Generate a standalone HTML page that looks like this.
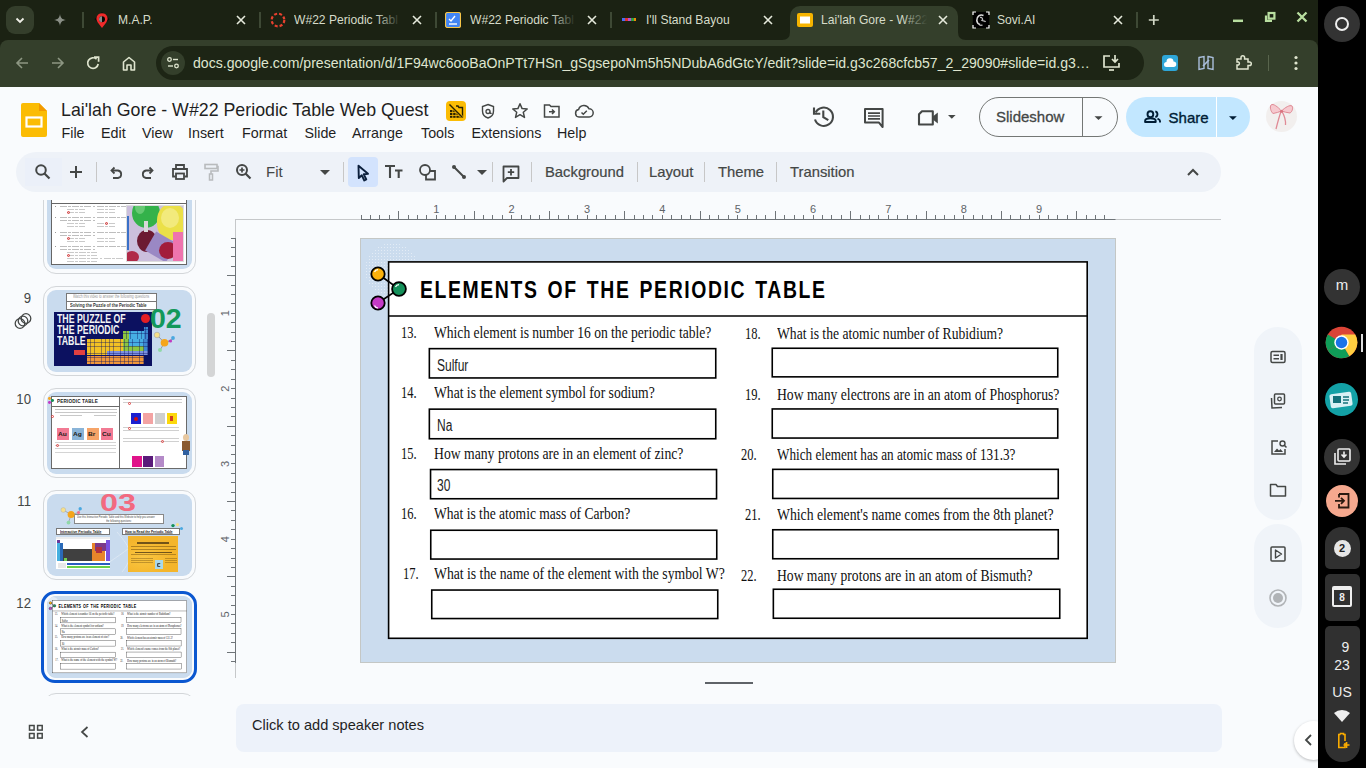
<!DOCTYPE html>
<html><head><meta charset="utf-8"><style>
*{box-sizing:border-box;margin:0;padding:0}
html,body{width:1366px;height:768px;overflow:hidden;background:#f9fbfd;font-family:"Liberation Sans",sans-serif;position:relative}
.a{position:absolute}
.tt{color:#d6dcc9;font-size:13px;white-space:nowrap;line-height:16px}
.q{font-family:"Liberation Serif",serif;font-size:16px;line-height:18px;color:#111;white-space:nowrap;transform-origin:0 0}
.ans{font-family:"Liberation Sans",sans-serif;font-size:16px;line-height:18px;color:#222;white-space:nowrap;transform:scaleX(0.75);transform-origin:0 0}
</style></head><body>
<div class="a" style="left:0;top:86px;width:1318px;height:682px;background:#f9fbfd"></div>
<div class="a" style="left:0;top:0;width:1318px;height:87px;background:#1b2213"></div>
<div class="a" style="left:6px;top:6px;width:28px;height:28px;border-radius:9px;background:#343e2b"></div>
<svg class="a" style="left:12px;top:12px" width="16" height="16" viewBox="0 0 16 16"><path d="M4.5 6.5 L8 10 L11.5 6.5" stroke="#f0f0e8" stroke-width="1.8" fill="none"/></svg>
<svg class="a" style="left:52px;top:12px" width="16" height="16" viewBox="0 0 16 16"><path d="M8 2 C8.6 6 10 7.4 14 8 C10 8.6 8.6 10 8 14 C7.4 10 6 8.6 2 8 C6 7.4 7.4 6 8 2Z" fill="#8a8f86"/></svg>
<div class="a" style="left:82px;top:12px;width:2px;height:16px;background:#3e4935"></div>
<div class="a" style="left:790px;top:6px;width:168px;height:34px;background:#343f2b;border-radius:10px 10px 0 0"></div>
<svg class="a" style="left:782px;top:32px" width="8" height="8"><path d="M0 8 Q8 8 8 0 L8 8Z" fill="#343f2b"/></svg>
<svg class="a" style="left:958px;top:32px" width="8" height="8"><path d="M8 8 Q0 8 0 0 L0 8Z" fill="#343f2b"/></svg>
<div class="a" style="left:118px;top:10px;width:110px;height:20px;overflow:hidden"><div class="a tt" style="left:0;top:2px;transform:scaleX(0.93);transform-origin:0 0">M.A.P.</div></div>
<svg class="a" style="left:235px;top:14px" width="12" height="12" viewBox="0 0 12 12"><path d="M2 2 L10 10 M10 2 L2 10" stroke="#e6eadc" stroke-width="1.6"/></svg>
<div class="a" style="left:259px;top:12px;width:2px;height:16px;background:#3e4935"></div>
<svg class="a" style="left:0;top:0;width:1px;height:1px;overflow:visible"><path d="M102 12 L109.5 19.3 L102 26 L94.5 19.3Z" fill="#0a0a0a"/><path d="M102 28 L97.6 22.2 A5.6 5.6 0 1 1 106.4 22.2Z" fill="#f02a2a"/><circle cx="102" cy="19.3" r="3" fill="#050505"/><path d="M102 16.3 A3 3 0 0 0 102 22.3Z" fill="#8a8a8a"/></svg>
<div class="a" style="left:294px;top:10px;width:110px;height:20px;overflow:hidden"><div class="a tt" style="left:0;top:2px;transform:scaleX(0.93);transform-origin:0 0">W#22 Periodic Tabl</div></div>
<div class="a" style="left:376px;top:10px;width:28px;height:20px;background:linear-gradient(90deg,rgba(0,0,0,0),#1b2213 90%)"></div>
<svg class="a" style="left:411px;top:14px" width="12" height="12" viewBox="0 0 12 12"><path d="M2 2 L10 10 M10 2 L2 10" stroke="#e6eadc" stroke-width="1.6"/></svg>
<div class="a" style="left:435px;top:12px;width:2px;height:16px;background:#3e4935"></div>
<svg class="a" style="left:270px;top:12px" width="16" height="16" viewBox="0 0 16 16"><circle cx="8" cy="8" r="6.3" stroke="#e8412f" stroke-width="2.2" fill="none" stroke-dasharray="3 2"/></svg>
<div class="a" style="left:470px;top:10px;width:109px;height:20px;overflow:hidden"><div class="a tt" style="left:0;top:2px;transform:scaleX(0.93);transform-origin:0 0">W#22 Periodic Tabl</div></div>
<div class="a" style="left:551px;top:10px;width:28px;height:20px;background:linear-gradient(90deg,rgba(0,0,0,0),#1b2213 90%)"></div>
<svg class="a" style="left:586px;top:14px" width="12" height="12" viewBox="0 0 12 12"><path d="M2 2 L10 10 M10 2 L2 10" stroke="#e6eadc" stroke-width="1.6"/></svg>
<div class="a" style="left:610px;top:12px;width:2px;height:16px;background:#3e4935"></div>
<svg class="a" style="left:445px;top:12px" width="16" height="16" viewBox="0 0 16 16"><rect x="0.5" y="0.5" width="15" height="15" rx="2" fill="#4285f4" stroke="#f7c548" stroke-width="1.2"/><path d="M4 7 L6 9 L10 4" stroke="#fff" stroke-width="1.4" fill="none"/><path d="M4 12 H12" stroke="#fff" stroke-width="1.4"/></svg>
<div class="a" style="left:646px;top:10px;width:109px;height:20px;overflow:hidden"><div class="a tt" style="left:0;top:2px;transform:scaleX(0.93);transform-origin:0 0">I'll Stand Bayou</div></div>
<svg class="a" style="left:762px;top:14px" width="12" height="12" viewBox="0 0 12 12"><path d="M2 2 L10 10 M10 2 L2 10" stroke="#e6eadc" stroke-width="1.6"/></svg>
<svg class="a" style="left:621px;top:12px" width="16" height="16" viewBox="0 0 16 16"><rect x="1" y="6" width="3" height="3" fill="#4a6cf7"/><rect x="4" y="6" width="3" height="3" fill="#e03131"/><rect x="7" y="6" width="3" height="3" fill="#b84fd6"/><rect x="10" y="6" width="3" height="3" fill="#2f9e44"/><rect x="13" y="6" width="2" height="3" fill="#f08c00"/></svg>
<div class="a" style="left:821px;top:10px;width:109px;height:20px;overflow:hidden"><div class="a tt" style="left:0;top:2px;transform:scaleX(0.93);transform-origin:0 0">Lai'lah Gore - W#22</div></div>
<div class="a" style="left:902px;top:10px;width:28px;height:20px;background:linear-gradient(90deg,rgba(0,0,0,0),#343f2b 90%)"></div>
<svg class="a" style="left:937px;top:14px" width="12" height="12" viewBox="0 0 12 12"><path d="M2 2 L10 10 M10 2 L2 10" stroke="#e6eadc" stroke-width="1.6"/></svg>
<svg class="a" style="left:797px;top:12px" width="16" height="16" viewBox="0 0 16 16"><rect x="0" y="1" width="16" height="14" rx="2" fill="#f6b400"/><rect x="3" y="4.5" width="10" height="7" fill="#fff"/></svg>
<div class="a" style="left:997px;top:10px;width:108px;height:20px;overflow:hidden"><div class="a tt" style="left:0;top:2px;transform:scaleX(0.93);transform-origin:0 0">Sovi.AI</div></div>
<svg class="a" style="left:1112px;top:14px" width="12" height="12" viewBox="0 0 12 12"><path d="M2 2 L10 10 M10 2 L2 10" stroke="#e6eadc" stroke-width="1.6"/></svg>
<div class="a" style="left:1136px;top:12px;width:2px;height:16px;background:#3e4935"></div>
<svg class="a" style="left:0;top:0;width:1px;height:1px;overflow:visible"><rect x="972.8" y="11.9" width="16.4" height="16.1" fill="#000"/><path d="M973 15 V12 H976 M986 12 H989 V15 M973 25 V28 H976 M986 28 H989 V25" stroke="#fff" stroke-width="1.2" fill="none"/><path d="M983.5 15.5 C980 14 976.5 16.5 976.8 20.5 C977 23 978.5 24 980 24.5" stroke="#ddd" stroke-width="1.6" fill="none"/><path d="M980 17.5 C982 17 983.5 19 982 20.5 C983.5 21 985 20.5 985.5 22" stroke="#bbb" stroke-width="1.3" fill="none"/><path d="M979.5 25.2 H982.5" stroke="#ccc" stroke-width="1.2"/></svg>
<svg class="a" style="left:0;top:0" width="1318" height="40"><path d="M1148.8 20 H1158.8 M1153.8 15 V25" stroke="#d2d8c6" stroke-width="1.7"/><path d="M1233 20.8 H1243" stroke="#b9dfa0" stroke-width="2.5"/><rect x="1268.6" y="13" width="5.8" height="5.6" stroke="#b9dfa0" stroke-width="2.2" fill="none"/><path d="M1266 15.5 V20.8 H1272" stroke="#b9dfa0" stroke-width="2.2" fill="none"/><path d="M1297.5 12.5 L1306.5 21.5 M1306.5 12.5 L1297.5 21.5" stroke="#b9dfa0" stroke-width="2.3"/></svg>
<div class="a" style="left:0;top:40px;width:1318px;height:47px;background:#343f2b;border-radius:8px 8px 0 0"></div>
<svg class="a" style="left:14px;top:55px" width="16" height="16" viewBox="0 0 16 16"><path d="M14 8 H3 M8 3 L3 8 L8 13" stroke="#8d9783" stroke-width="1.6" fill="none"/></svg>
<svg class="a" style="left:50px;top:55px" width="16" height="16" viewBox="0 0 16 16"><path d="M2 8 H13 M8 3 L13 8 L8 13" stroke="#8d9783" stroke-width="1.6" fill="none"/></svg>
<svg class="a" style="left:85px;top:55px" width="16" height="16" viewBox="0 0 16 16"><path d="M13.2 9 A5.3 5.3 0 1 1 11.6 4.2" stroke="#dfe5cf" stroke-width="1.7" fill="none"/><path d="M9 2.2 H13.6 V6.8" stroke="#dfe5cf" stroke-width="1.7" fill="none"/></svg>
<svg class="a" style="left:121px;top:55px" width="16" height="16" viewBox="0 0 16 16"><path d="M2.5 15 V7 L8 2.5 L13.5 7 V15 H10 V10 H6 V15Z" stroke="#dfe5cf" stroke-width="1.6" fill="none" stroke-linejoin="round"/></svg>
<div class="a" style="left:156px;top:46px;width:988px;height:34px;border-radius:17px;background:#1d2515"></div>
<div class="a" style="left:161px;top:51px;width:24px;height:24px;border-radius:12px;background:#343f2b"></div>
<svg class="a" style="left:165px;top:55px" width="16" height="16" viewBox="0 0 16 16"><circle cx="4.5" cy="4.5" r="1.8" stroke="#dfe5cf" stroke-width="1.3" fill="none"/><path d="M8 4.5 H13" stroke="#dfe5cf" stroke-width="1.4"/><circle cx="11.5" cy="11" r="1.8" stroke="#dfe5cf" stroke-width="1.3" fill="none"/><path d="M3 11 H8" stroke="#dfe5cf" stroke-width="1.4"/></svg>
<div class="a" style="left:193px;top:54px;font-size:15px;color:#dfe5cf;white-space:nowrap;transform:scaleX(0.9386);transform-origin:0 0">docs.google.com/presentation/d/1F94wc6ooBaOnPTt7HSn_gSgsepoNm5h5NDubA6dGtcY/edit?slide=id.g3c268cfcb57_2_29090#slide=id.g3…</div>
<svg class="a" style="left:1102px;top:54px" width="20" height="18" viewBox="0 0 20 18"><path d="M8 2 H2 V13 H17 V9" stroke="#dfe5cf" stroke-width="1.7" fill="none"/><path d="M13 1 V8 M10 5 L13 8 L16 5" stroke="#dfe5cf" stroke-width="1.7" fill="none"/><path d="M7 16 H12" stroke="#dfe5cf" stroke-width="1.7"/></svg>
<div class="a" style="left:1162px;top:55px;width:16px;height:16px;border-radius:3px;background:#2ea6d8"></div>
<svg class="a" style="left:1163px;top:57px" width="14" height="12" viewBox="0 0 14 12"><path d="M3.5 10 A2.5 2.5 0 0 1 3.5 5 A3.5 3.5 0 0 1 10.5 4.5 A2.7 2.7 0 0 1 10.5 10Z" fill="#fff"/></svg>
<svg class="a" style="left:1198px;top:55px" width="16" height="16" viewBox="0 0 16 16"><path d="M1 2.5 L6 1.5 V13.5 L1 14.5Z M10 1.5 L15 2.5 V14.5 L10 13.5Z" stroke="#a9bedb" stroke-width="1.4" fill="none"/><path d="M5 11 L11 5" stroke="#a9bedb" stroke-width="1.6"/></svg>
<svg class="a" style="left:1235px;top:54px" width="18" height="18" viewBox="0 0 18 18"><path d="M2 5 H6 V3.5 A1.8 1.8 0 0 1 9.6 3.5 V5 H13 V8 H14.5 A1.8 1.8 0 0 1 14.5 11.6 H13 V15 H2 V11 H3.5 A1.7 1.7 0 0 0 3.5 8 H2Z" stroke="#dfe5cf" stroke-width="1.5" fill="none"/></svg>
<div class="a" style="left:1268px;top:55px;width:1px;height:16px;background:#59654d"></div>
<svg class="a" style="left:1290px;top:55px" width="12" height="16" viewBox="0 0 12 16"><circle cx="6" cy="2.5" r="1.6" fill="#dfe5cf"/><circle cx="6" cy="8" r="1.6" fill="#dfe5cf"/><circle cx="6" cy="13.5" r="1.6" fill="#dfe5cf"/></svg>
<svg class="a" style="left:21px;top:103px" width="26" height="34" viewBox="0 0 26 34"><path d="M2 0 H18 L26 8 V32 A2 2 0 0 1 24 34 H2 A2 2 0 0 1 0 32 V2 A2 2 0 0 1 2 0Z" fill="#fbbc04"/><path d="M18 0 L26 8 H18Z" fill="#f29900"/><rect x="5.5" y="14.5" width="15" height="9" stroke="#fff" stroke-width="2.2" fill="none"/></svg>
<div class="a" style="left:61px;top:99.5px;font-size:17.8px;color:#1f1f1f;white-space:nowrap">Lai'lah Gore - W#22 Periodic Table Web Quest</div>
<div class="a" style="left:446px;top:101px;width:20px;height:20px;border-radius:4px;background:#fbbc04"></div>
<svg class="a" style="left:448px;top:103px" width="16" height="16" viewBox="0 0 16 16"><path d="M8 3 H10 L11 4.5 H14.5 V14.5" stroke="#2a2200" stroke-width="1.4" fill="none"/><g fill="#2a2200"><rect x="2" y="7" width="2.4" height="2.2"/><rect x="5.2" y="7" width="2.4" height="2.2"/><rect x="2" y="10" width="2.4" height="2.2"/><rect x="5.2" y="10" width="2.4" height="2.2"/><rect x="8.4" y="10" width="2.4" height="2.2"/><rect x="2" y="13" width="2.4" height="1.8"/><rect x="5.2" y="13" width="2.4" height="1.8"/><rect x="8.4" y="13" width="2.4" height="1.8"/><rect x="11.4" y="13" width="2.4" height="1.8"/></g><path d="M1.5 1.5 L14.5 14.5" stroke="#fbbc04" stroke-width="2.6"/><path d="M1.5 1.5 L14.5 14.5" stroke="#2a2200" stroke-width="1.4"/></svg>
<svg class="a" style="left:480px;top:103px" width="16" height="16" viewBox="0 0 16 16"><path d="M8 1.5 L13.5 3.5 V8 C13.5 11.5 11 14 8 15 C5 14 2.5 11.5 2.5 8 V3.5Z" stroke="#444746" stroke-width="1.4" fill="none"/><circle cx="8" cy="8.5" r="2" stroke="#444746" stroke-width="1.3" fill="none"/><path d="M10 8.5 V10 A1 1 0 0 0 11.5 10" stroke="#444746" stroke-width="1.2" fill="none"/></svg>
<svg class="a" style="left:511px;top:102px" width="18" height="18" viewBox="0 0 18 18"><path d="M9 1.8 L11.1 6.6 L16.2 7 L12.3 10.3 L13.5 15.4 L9 12.7 L4.5 15.4 L5.7 10.3 L1.8 7 L6.9 6.6Z" stroke="#444746" stroke-width="1.5" fill="none" stroke-linejoin="round"/></svg>
<svg class="a" style="left:543px;top:102px" width="18" height="18" viewBox="0 0 18 18"><path d="M1.5 3 H6.5 L8 4.5 H16 V15 H1.5Z" stroke="#444746" stroke-width="1.5" fill="none"/><path d="M6 9.8 H11 M9 7.5 L11.3 9.8 L9 12" stroke="#444746" stroke-width="1.5" fill="none"/></svg>
<svg class="a" style="left:574px;top:102px" width="20" height="18" viewBox="0 0 20 18"><path d="M5 15 A3.8 3.8 0 0 1 4.6 7.5 A5.6 5.6 0 0 1 15 6.8 A4.1 4.1 0 0 1 15.2 15Z" stroke="#444746" stroke-width="1.5" fill="none"/><path d="M7.5 10.5 L9.3 12.3 L12.8 8.8" stroke="#444746" stroke-width="1.5" fill="none"/></svg>
<div class="a" style="left:61.5px;top:125px;font-size:14.3px;color:#1f1f1f;white-space:nowrap">File</div>
<div class="a" style="left:101px;top:125px;font-size:14.3px;color:#1f1f1f;white-space:nowrap">Edit</div>
<div class="a" style="left:142px;top:125px;font-size:14.3px;color:#1f1f1f;white-space:nowrap">View</div>
<div class="a" style="left:188px;top:125px;font-size:14.3px;color:#1f1f1f;white-space:nowrap">Insert</div>
<div class="a" style="left:242px;top:125px;font-size:14.3px;color:#1f1f1f;white-space:nowrap">Format</div>
<div class="a" style="left:304.5px;top:125px;font-size:14.3px;color:#1f1f1f;white-space:nowrap">Slide</div>
<div class="a" style="left:352px;top:125px;font-size:14.3px;color:#1f1f1f;white-space:nowrap">Arrange</div>
<div class="a" style="left:421px;top:125px;font-size:14.3px;color:#1f1f1f;white-space:nowrap">Tools</div>
<div class="a" style="left:471.5px;top:125px;font-size:14.3px;color:#1f1f1f;white-space:nowrap">Extensions</div>
<div class="a" style="left:557px;top:125px;font-size:14.3px;color:#1f1f1f;white-space:nowrap">Help</div>
<svg class="a" style="left:0;top:0;width:1px;height:1px;overflow:visible"><g><path d="M815.6 112.5 A9.2 9.2 0 1 1 815 119.5" stroke="#444746" stroke-width="2.1" fill="none"/><path d="M814 107.5 V113.8 H820.3" stroke="#444746" stroke-width="2.1" fill="none"/><path d="M823.3 110.5 V117.2 L828.3 120.2" stroke="#444746" stroke-width="2.1" fill="none"/><path d="M865 109 H882.6 V127 L879 122.6 H865Z" stroke="#444746" stroke-width="2" fill="none" stroke-linejoin="round"/><path d="M868 113.2 H880 M868 116 H880 M868 118.8 H880" stroke="#444746" stroke-width="1.7"/><path d="M922 111.2 H932.8 V124.5 H919 V114.2Z" stroke="#444746" stroke-width="2.1" fill="none" stroke-linejoin="round"/><path d="M932.8 116.5 L937.8 112.5 V123.5 L932.8 119.5Z" fill="#444746"/><path d="M948 115 H955.6 L951.8 118.8Z" fill="#444746"/></g></svg>
<div class="a" style="left:979px;top:97px;width:139px;height:40px;border:1px solid #747775;border-radius:20px"></div>
<div class="a" style="left:1082px;top:97px;width:1px;height:40px;background:#747775"></div>
<div class="a" style="left:996px;top:108px;font-size:15px;color:#444746;white-space:nowrap;-webkit-text-stroke:0.3px #444746">Slideshow</div>
<div class="a" style="left:1126px;top:97px;width:124px;height:40px;border-radius:20px;background:#c2e7ff"></div>
<div class="a" style="left:1216px;top:97px;width:1px;height:40px;background:#fff"></div>
<svg class="a" style="left:0;top:0;width:1px;height:1px;overflow:visible"><circle cx="1150.4" cy="114.2" r="2.9" stroke="#001d35" stroke-width="1.9" fill="none"/><path d="M1145.1 122 V121 C1145.1 119.2 1147.6 118.3 1150.4 118.3 C1153.2 118.3 1155.7 119.2 1155.7 121 V122Z" stroke="#001d35" stroke-width="1.9" fill="none" stroke-linejoin="round"/><path d="M1155.3 111.4 A2.9 2.9 0 0 1 1155.3 117" stroke="#001d35" stroke-width="1.9" fill="none"/><path d="M1157.5 118.6 C1159 119.2 1160 120 1160 121 V122.6" stroke="#001d35" stroke-width="1.9" fill="none"/><path d="M1229 116.2 H1236.8 L1232.9 120Z" fill="#001d35"/><path d="M1094.5 116.2 H1102.5 L1098.5 120Z" fill="#444746"/></svg>
<div class="a" style="left:1168.6px;top:108.5px;font-size:15px;color:#001d35;white-space:nowrap;-webkit-text-stroke:0.35px #001d35">Share</div>
<div class="a" style="left:1266.4px;top:101.3px;width:31px;height:31px;border-radius:16px;background:#f2efee"></div>
<svg class="a" style="left:0;top:0;width:1px;height:1px;overflow:visible"><path d="M1281.5 111 C1278 107 1273 103 1271 105 C1269.5 107 1271 112 1273 113.5 C1276 113 1279 112 1281.5 111Z" stroke="#e08a95" stroke-width="1" fill="#f6c9cf"/><path d="M1281.5 111 C1285 107.5 1290 104.5 1292 106 C1293.5 108 1292 112 1290 113 C1287 112.5 1284 112 1281.5 111Z" stroke="#e08a95" stroke-width="1" fill="#f6c9cf"/><path d="M1281 111.5 C1279 117 1277.5 123 1276 129 M1282 111.5 C1284 115 1286 119 1285.5 125" stroke="#e08a95" stroke-width="1.3" fill="none"/><circle cx="1281.5" cy="111.2" r="1.5" fill="#d9737f"/></svg>
<div class="a" style="left:16px;top:152px;width:1205px;height:40px;border-radius:20px;background:#eef2f8"></div>
<div class="a" style="left:25px;top:158px;width:37px;height:28px;background:#ebf0f9"></div>
<svg class="a" style="left:34px;top:163px" width="18" height="18" viewBox="0 0 18 18"><circle cx="7" cy="7" r="4.8" stroke="#444746" stroke-width="2" fill="none"/><path d="M10.5 10.5 L15.5 15.5" stroke="#444746" stroke-width="2.2"/></svg>
<svg class="a" style="left:68px;top:164px" width="16" height="16" viewBox="0 0 16 16"><path d="M8 2 V14 M2 8 H14" stroke="#444746" stroke-width="2"/></svg>
<div class="a" style="left:96px;top:162px;width:1px;height:20px;background:#c7c7c7"></div>
<svg class="a" style="left:108px;top:164px" width="16" height="16" viewBox="0 0 16 16"><path d="M4 6.5 H10 A3.8 3.8 0 0 1 10 14 H5" stroke="#444746" stroke-width="1.8" fill="none"/><path d="M6.5 3.5 L3.5 6.5 L6.5 9.5" stroke="#444746" stroke-width="1.8" fill="none"/></svg>
<svg class="a" style="left:140px;top:164px" width="16" height="16" viewBox="0 0 16 16"><path d="M12 6.5 H6 A3.8 3.8 0 0 0 6 14 H11" stroke="#444746" stroke-width="1.8" fill="none"/><path d="M9.5 3.5 L12.5 6.5 L9.5 9.5" stroke="#444746" stroke-width="1.8" fill="none"/></svg>
<svg class="a" style="left:171px;top:163px" width="18" height="18" viewBox="0 0 18 18"><path d="M5 5 V2 H13 V5" stroke="#444746" stroke-width="1.8" fill="none"/><path d="M4.5 13.5 H2 V6 H16 V13.5 H13.5" stroke="#444746" stroke-width="1.8" fill="none"/><rect x="5" y="10.5" width="8" height="5.5" stroke="#444746" stroke-width="1.8" fill="none"/></svg>
<svg class="a" style="left:203px;top:163px" width="16" height="18" viewBox="0 0 16 18"><rect x="2" y="1.5" width="12" height="4" stroke="#b8bbbd" stroke-width="1.6" fill="none"/><path d="M14 3.5 H15 V8 H8 V11" stroke="#b8bbbd" stroke-width="1.6" fill="none"/><rect x="6.5" y="11" width="3" height="6" stroke="#b8bbbd" stroke-width="1.5" fill="none"/></svg>
<svg class="a" style="left:235px;top:163px" width="18" height="18" viewBox="0 0 18 18"><circle cx="7" cy="7" r="5" stroke="#444746" stroke-width="2" fill="none"/><path d="M7 4.5 V9.5 M4.5 7 H9.5" stroke="#444746" stroke-width="1.7"/><path d="M10.5 10.5 L15.5 15.5" stroke="#444746" stroke-width="2.2"/></svg>
<div class="a" style="left:266px;top:163px;font-size:15px;color:#444746">Fit</div>
<svg class="a" style="left:320px;top:170px" width="10" height="6" viewBox="0 0 10 6"><path d="M0 0 H10 L5 5Z" fill="#444746"/></svg>
<div class="a" style="left:343px;top:162px;width:1px;height:20px;background:#c7c7c7"></div>
<div class="a" style="left:348px;top:157px;width:30px;height:30px;border-radius:4px;background:#d3e3fd"></div>
<svg class="a" style="left:354px;top:163px" width="18" height="20" viewBox="0 0 18 20"><path d="M4.5 2.8 L14 10.8 L9.8 11.3 L12.3 16.5 L10.3 17.5 L7.8 12.3 L4.8 15Z" fill="none" stroke="#0b1f3c" stroke-width="1.9" stroke-linejoin="round"/></svg>
<svg class="a" style="left:384px;top:164px" width="20" height="16" viewBox="0 0 20 16"><path d="M1 2 H11 M6 2 V14 M11 6.5 H18.5 M14.7 6.5 V14" stroke="#444746" stroke-width="2.1" fill="none"/></svg>
<svg class="a" style="left:418px;top:163px" width="20" height="18" viewBox="0 0 20 18"><circle cx="7" cy="7" r="5" stroke="#444746" stroke-width="1.8" fill="none"/><path d="M11.9 8 H17 V16.5 H8 V11.9" stroke="#444746" stroke-width="1.8" fill="none"/></svg>
<svg class="a" style="left:451px;top:164px" width="16" height="16" viewBox="0 0 16 16"><path d="M3 3 L13 13" stroke="#444746" stroke-width="2"/><circle cx="3" cy="3" r="2" fill="#444746"/><circle cx="13" cy="13" r="2" fill="#444746"/></svg>
<svg class="a" style="left:477px;top:170px" width="10" height="6" viewBox="0 0 10 6"><path d="M0 0 H10 L5 5Z" fill="#444746"/></svg>
<div class="a" style="left:492px;top:162px;width:1px;height:20px;background:#c7c7c7"></div>
<svg class="a" style="left:501px;top:163.5px" width="20" height="20" viewBox="0 0 20 20"><path d="M2.5 2.5 H17.5 V14 H6 L2.5 17.5Z" stroke="#444746" stroke-width="1.8" fill="none" stroke-linejoin="round"/><path d="M10 5 V11.5 M6.8 8.2 H13.2" stroke="#444746" stroke-width="1.8"/></svg>
<div class="a" style="left:531px;top:162px;width:1px;height:20px;background:#c7c7c7"></div>
<div class="a" style="left:545px;top:163.7px;font-size:14.8px;color:#444746;white-space:nowrap;-webkit-text-stroke:0.2px #444746">Background</div>
<div class="a" style="left:649px;top:163.7px;font-size:14.8px;color:#444746;white-space:nowrap;-webkit-text-stroke:0.2px #444746">Layout</div>
<div class="a" style="left:718px;top:163.7px;font-size:14.8px;color:#444746;white-space:nowrap;-webkit-text-stroke:0.2px #444746">Theme</div>
<div class="a" style="left:790px;top:163.7px;font-size:14.8px;color:#444746;white-space:nowrap;-webkit-text-stroke:0.2px #444746">Transition</div>
<div class="a" style="left:637px;top:162px;width:1px;height:20px;background:#c7c7c7"></div>
<div class="a" style="left:704px;top:162px;width:1px;height:20px;background:#c7c7c7"></div>
<div class="a" style="left:776px;top:162px;width:1px;height:20px;background:#c7c7c7"></div>
<svg class="a" style="left:1186px;top:167px" width="14" height="10" viewBox="0 0 14 10"><path d="M2 8 L7 3 L12 8" stroke="#444746" stroke-width="2" fill="none"/></svg>
<div class="a" style="left:235px;top:219px;width:986px;height:1px;background:#c6c8ca"></div>
<div class="a" style="left:235px;top:219px;width:1px;height:459px;background:#c6c8ca"></div>
<svg class="a" style="left:0;top:0;width:1px;height:1px;overflow:visible"><path d="M361 219.5 H1115.5" stroke="#6f7478" stroke-width="1"/><path d="M235.5 238 V663" stroke="#6f7478" stroke-width="1"/><path d="M361.5 215 V219.5" stroke="#6f7478"/><path d="M370.5 215 V219.5" stroke="#6f7478"/><path d="M379.5 215 V219.5" stroke="#6f7478"/><path d="M389.5 215 V219.5" stroke="#6f7478"/><path d="M398.5 211 V219.5" stroke="#6f7478"/><path d="M408.5 215 V219.5" stroke="#6f7478"/><path d="M417.5 215 V219.5" stroke="#6f7478"/><path d="M426.5 215 V219.5" stroke="#6f7478"/><path d="M436.5 215 V219.5" stroke="#6f7478"/><text x="436.34" y="212.7" font-size="11" text-anchor="middle" fill="#5f6368" font-family="Liberation Sans">1</text><path d="M445.5 215 V219.5" stroke="#6f7478"/><path d="M455.5 215 V219.5" stroke="#6f7478"/><path d="M464.5 215 V219.5" stroke="#6f7478"/><path d="M474.5 211 V219.5" stroke="#6f7478"/><path d="M483.5 215 V219.5" stroke="#6f7478"/><path d="M492.5 215 V219.5" stroke="#6f7478"/><path d="M502.5 215 V219.5" stroke="#6f7478"/><path d="M511.5 215 V219.5" stroke="#6f7478"/><text x="511.68" y="212.7" font-size="11" text-anchor="middle" fill="#5f6368" font-family="Liberation Sans">2</text><path d="M521.5 215 V219.5" stroke="#6f7478"/><path d="M530.5 215 V219.5" stroke="#6f7478"/><path d="M539.5 215 V219.5" stroke="#6f7478"/><path d="M549.5 211 V219.5" stroke="#6f7478"/><path d="M558.5 215 V219.5" stroke="#6f7478"/><path d="M568.5 215 V219.5" stroke="#6f7478"/><path d="M577.5 215 V219.5" stroke="#6f7478"/><path d="M587.5 215 V219.5" stroke="#6f7478"/><text x="587.02" y="212.7" font-size="11" text-anchor="middle" fill="#5f6368" font-family="Liberation Sans">3</text><path d="M596.5 215 V219.5" stroke="#6f7478"/><path d="M605.5 215 V219.5" stroke="#6f7478"/><path d="M615.5 215 V219.5" stroke="#6f7478"/><path d="M624.5 211 V219.5" stroke="#6f7478"/><path d="M634.5 215 V219.5" stroke="#6f7478"/><path d="M643.5 215 V219.5" stroke="#6f7478"/><path d="M652.5 215 V219.5" stroke="#6f7478"/><path d="M662.5 215 V219.5" stroke="#6f7478"/><text x="662.36" y="212.7" font-size="11" text-anchor="middle" fill="#5f6368" font-family="Liberation Sans">4</text><path d="M671.5 215 V219.5" stroke="#6f7478"/><path d="M681.5 215 V219.5" stroke="#6f7478"/><path d="M690.5 215 V219.5" stroke="#6f7478"/><path d="M700.5 211 V219.5" stroke="#6f7478"/><path d="M709.5 215 V219.5" stroke="#6f7478"/><path d="M718.5 215 V219.5" stroke="#6f7478"/><path d="M728.5 215 V219.5" stroke="#6f7478"/><path d="M737.5 215 V219.5" stroke="#6f7478"/><text x="737.70" y="212.7" font-size="11" text-anchor="middle" fill="#5f6368" font-family="Liberation Sans">5</text><path d="M747.5 215 V219.5" stroke="#6f7478"/><path d="M756.5 215 V219.5" stroke="#6f7478"/><path d="M765.5 215 V219.5" stroke="#6f7478"/><path d="M775.5 211 V219.5" stroke="#6f7478"/><path d="M784.5 215 V219.5" stroke="#6f7478"/><path d="M794.5 215 V219.5" stroke="#6f7478"/><path d="M803.5 215 V219.5" stroke="#6f7478"/><path d="M813.5 215 V219.5" stroke="#6f7478"/><text x="813.04" y="212.7" font-size="11" text-anchor="middle" fill="#5f6368" font-family="Liberation Sans">6</text><path d="M822.5 215 V219.5" stroke="#6f7478"/><path d="M831.5 215 V219.5" stroke="#6f7478"/><path d="M841.5 215 V219.5" stroke="#6f7478"/><path d="M850.5 211 V219.5" stroke="#6f7478"/><path d="M860.5 215 V219.5" stroke="#6f7478"/><path d="M869.5 215 V219.5" stroke="#6f7478"/><path d="M878.5 215 V219.5" stroke="#6f7478"/><path d="M888.5 215 V219.5" stroke="#6f7478"/><text x="888.38" y="212.7" font-size="11" text-anchor="middle" fill="#5f6368" font-family="Liberation Sans">7</text><path d="M897.5 215 V219.5" stroke="#6f7478"/><path d="M907.5 215 V219.5" stroke="#6f7478"/><path d="M916.5 215 V219.5" stroke="#6f7478"/><path d="M926.5 211 V219.5" stroke="#6f7478"/><path d="M935.5 215 V219.5" stroke="#6f7478"/><path d="M944.5 215 V219.5" stroke="#6f7478"/><path d="M954.5 215 V219.5" stroke="#6f7478"/><path d="M963.5 215 V219.5" stroke="#6f7478"/><text x="963.72" y="212.7" font-size="11" text-anchor="middle" fill="#5f6368" font-family="Liberation Sans">8</text><path d="M973.5 215 V219.5" stroke="#6f7478"/><path d="M982.5 215 V219.5" stroke="#6f7478"/><path d="M991.5 215 V219.5" stroke="#6f7478"/><path d="M1001.5 211 V219.5" stroke="#6f7478"/><path d="M1010.5 215 V219.5" stroke="#6f7478"/><path d="M1020.5 215 V219.5" stroke="#6f7478"/><path d="M1029.5 215 V219.5" stroke="#6f7478"/><path d="M1039.5 215 V219.5" stroke="#6f7478"/><text x="1039.06" y="212.7" font-size="11" text-anchor="middle" fill="#5f6368" font-family="Liberation Sans">9</text><path d="M1048.5 215 V219.5" stroke="#6f7478"/><path d="M1057.5 215 V219.5" stroke="#6f7478"/><path d="M1067.5 215 V219.5" stroke="#6f7478"/><path d="M1076.5 211 V219.5" stroke="#6f7478"/><path d="M1086.5 215 V219.5" stroke="#6f7478"/><path d="M1095.5 215 V219.5" stroke="#6f7478"/><path d="M1104.5 215 V219.5" stroke="#6f7478"/><path d="M231 238.5 H235.5" stroke="#6f7478"/><path d="M231 247.5 H235.5" stroke="#6f7478"/><path d="M231 256.5 H235.5" stroke="#6f7478"/><path d="M231 266.5 H235.5" stroke="#6f7478"/><path d="M227 275.5 H235.5" stroke="#6f7478"/><path d="M231 285.5 H235.5" stroke="#6f7478"/><path d="M231 294.5 H235.5" stroke="#6f7478"/><path d="M231 303.5 H235.5" stroke="#6f7478"/><path d="M231 313.5 H235.5" stroke="#6f7478"/><text x="0" y="0" font-size="11" text-anchor="middle" fill="#5f6368" font-family="Liberation Sans" transform="translate(228.8 313.30) rotate(-90)">1</text><path d="M231 322.5 H235.5" stroke="#6f7478"/><path d="M231 332.5 H235.5" stroke="#6f7478"/><path d="M231 341.5 H235.5" stroke="#6f7478"/><path d="M227 350.5 H235.5" stroke="#6f7478"/><path d="M231 360.5 H235.5" stroke="#6f7478"/><path d="M231 369.5 H235.5" stroke="#6f7478"/><path d="M231 379.5 H235.5" stroke="#6f7478"/><path d="M231 388.5 H235.5" stroke="#6f7478"/><text x="0" y="0" font-size="11" text-anchor="middle" fill="#5f6368" font-family="Liberation Sans" transform="translate(228.8 388.60) rotate(-90)">2</text><path d="M231 398.5 H235.5" stroke="#6f7478"/><path d="M231 407.5 H235.5" stroke="#6f7478"/><path d="M231 416.5 H235.5" stroke="#6f7478"/><path d="M227 426.5 H235.5" stroke="#6f7478"/><path d="M231 435.5 H235.5" stroke="#6f7478"/><path d="M231 445.5 H235.5" stroke="#6f7478"/><path d="M231 454.5 H235.5" stroke="#6f7478"/><path d="M231 463.5 H235.5" stroke="#6f7478"/><text x="0" y="0" font-size="11" text-anchor="middle" fill="#5f6368" font-family="Liberation Sans" transform="translate(228.8 463.90) rotate(-90)">3</text><path d="M231 473.5 H235.5" stroke="#6f7478"/><path d="M231 482.5 H235.5" stroke="#6f7478"/><path d="M231 492.5 H235.5" stroke="#6f7478"/><path d="M227 501.5 H235.5" stroke="#6f7478"/><path d="M231 510.5 H235.5" stroke="#6f7478"/><path d="M231 520.5 H235.5" stroke="#6f7478"/><path d="M231 529.5 H235.5" stroke="#6f7478"/><path d="M231 539.5 H235.5" stroke="#6f7478"/><text x="0" y="0" font-size="11" text-anchor="middle" fill="#5f6368" font-family="Liberation Sans" transform="translate(228.8 539.20) rotate(-90)">4</text><path d="M231 548.5 H235.5" stroke="#6f7478"/><path d="M231 558.5 H235.5" stroke="#6f7478"/><path d="M231 567.5 H235.5" stroke="#6f7478"/><path d="M227 576.5 H235.5" stroke="#6f7478"/><path d="M231 586.5 H235.5" stroke="#6f7478"/><path d="M231 595.5 H235.5" stroke="#6f7478"/><path d="M231 605.5 H235.5" stroke="#6f7478"/><path d="M231 614.5 H235.5" stroke="#6f7478"/><text x="0" y="0" font-size="11" text-anchor="middle" fill="#5f6368" font-family="Liberation Sans" transform="translate(228.8 614.50) rotate(-90)">5</text><path d="M231 623.5 H235.5" stroke="#6f7478"/><path d="M231 633.5 H235.5" stroke="#6f7478"/><path d="M231 642.5 H235.5" stroke="#6f7478"/><path d="M227 652.5 H235.5" stroke="#6f7478"/><path d="M231 661.5 H235.5" stroke="#6f7478"/></svg>
<div class="a" style="left:360px;top:238px;width:756px;height:425px"><div class="a" style="left:0;top:0;width:756px;height:425px;background:#cbdcee;overflow:hidden">
<div class="a" style="left:5px;top:5px;width:54px;height:54px;border-radius:50%;background:radial-gradient(circle,rgba(255,255,255,0.6) 0 0.6px,transparent 1px) 0 0/3px 3px;opacity:0.8"></div>
<div class="a" style="left:28px;top:23px;width:700px;height:378px;background:#fff"></div>
<svg class="a" style="left:0;top:0" width="756" height="425"><rect x="28.600000000000023" y="23.899999999999977" width="698.6" height="376.4" stroke="#000" stroke-width="1.6" fill="none"/><path d="M28.600000000000023 77.89999999999998 H727.2" stroke="#000" stroke-width="1.5"/></svg>
<div class="a" style="left:59.5px;top:39px;font-size:23px;line-height:27px;font-weight:bold;color:#000;white-space:nowrap;letter-spacing:1.9px;word-spacing:2.5px;transform:scaleX(0.8436);transform-origin:0 0">ELEMENTS OF THE PERIODIC TABLE</div>
<svg class="a" style="left:5px;top:24px" width="46" height="52" viewBox="0 0 46 52"><path d="M13 12 L34 27 L13 41" stroke="#000" stroke-width="1.6" fill="none"/><circle cx="13" cy="12" r="6.7" fill="#fbb20d" stroke="#000" stroke-width="1.8"/><path d="M9.5 10 A4 4 0 0 1 13 7.6" stroke="#fff" stroke-width="1.2" fill="none"/><circle cx="34" cy="27" r="6.9" fill="#14905a" stroke="#000" stroke-width="1.8"/><path d="M30.5 25 A4 4 0 0 1 34 22.6" stroke="#fff" stroke-width="1.2" fill="none"/><circle cx="13" cy="41" r="6.7" fill="#c43ac6" stroke="#000" stroke-width="1.8"/><path d="M9.5 43.5 A4 4 0 0 0 13 46" stroke="#fff" stroke-width="1.2" fill="none"/></svg>
<div class="a q" style="left:41.19999999999999px;top:85.60000000000002px;transform:scaleX(0.78)">13.</div>
<div class="a q" style="left:73.60000000000002px;top:85.60000000000002px;transform:scaleX(0.8480)">Which element is number 16 on the periodic table?</div>
<div class="a ans" style="left:76.80000000000001px;top:118.70000000000002px">Sulfur</div>
<div class="a q" style="left:41.19999999999999px;top:146.3px;transform:scaleX(0.78)">14.</div>
<div class="a q" style="left:73.60000000000002px;top:146.3px;transform:scaleX(0.8505)">What is the element symbol for sodium?</div>
<div class="a ans" style="left:76.80000000000001px;top:179.15px">Na</div>
<div class="a q" style="left:41.19999999999999px;top:206.7px;transform:scaleX(0.78)">15.</div>
<div class="a q" style="left:73.60000000000002px;top:206.7px;transform:scaleX(0.8557)">How many protons are in an element of zinc?</div>
<div class="a ans" style="left:76.80000000000001px;top:238.9px">30</div>
<div class="a q" style="left:41.19999999999999px;top:266.6px;transform:scaleX(0.78)">16.</div>
<div class="a q" style="left:73.60000000000002px;top:266.6px;transform:scaleX(0.8463)">What is the atomic mass of Carbon?</div>
<div class="a q" style="left:43px;top:327.0px;transform:scaleX(0.78)">17.</div>
<div class="a q" style="left:73.60000000000002px;top:327.0px;transform:scaleX(0.8551)">What is the name of the element with the symbol W?</div>
<div class="a q" style="left:384.5px;top:87.0px;transform:scaleX(0.78)">18.</div>
<div class="a q" style="left:416.9px;top:87.0px;transform:scaleX(0.8509)">What is the atomic number of Rubidium?</div>
<div class="a q" style="left:385px;top:148.2px;transform:scaleX(0.78)">19.</div>
<div class="a q" style="left:416.9px;top:148.2px;transform:scaleX(0.8542)">How many electrons are in an atom of Phosphorus?</div>
<div class="a q" style="left:381px;top:208.10000000000002px;transform:scaleX(0.78)">20.</div>
<div class="a q" style="left:416.9px;top:208.10000000000002px;transform:scaleX(0.8230)">Which element has an atomic mass of 131.3?</div>
<div class="a q" style="left:385px;top:267.79999999999995px;transform:scaleX(0.78)">21.</div>
<div class="a q" style="left:416.9px;top:267.79999999999995px;transform:scaleX(0.8561)">Which element's name comes from the 8th planet?</div>
<div class="a q" style="left:381px;top:329.0px;transform:scaleX(0.78)">22.</div>
<div class="a q" style="left:416.9px;top:329.0px;transform:scaleX(0.8509)">How many protons are in an atom of Bismuth?</div>
<svg class="a" style="left:0;top:0" width="756" height="425"><rect x="69.35" y="110.65" width="286.40" height="29.30" stroke="#000" stroke-width="1.6" fill="none"/><rect x="69.35" y="171.15" width="286.40" height="29.60" stroke="#000" stroke-width="1.6" fill="none"/><rect x="70.55" y="231.55" width="286.00" height="29.20" stroke="#000" stroke-width="1.6" fill="none"/><rect x="70.75" y="292.25" width="286.00" height="28.80" stroke="#000" stroke-width="1.6" fill="none"/><rect x="71.75" y="352.05" width="286.00" height="28.50" stroke="#000" stroke-width="1.6" fill="none"/><rect x="412.25" y="110.25" width="285.50" height="28.60" stroke="#000" stroke-width="1.6" fill="none"/><rect x="412.25" y="170.95" width="285.50" height="29.10" stroke="#000" stroke-width="1.6" fill="none"/><rect x="412.75" y="231.35" width="285.50" height="29.10" stroke="#000" stroke-width="1.6" fill="none"/><rect x="412.75" y="291.75" width="285.50" height="29.00" stroke="#000" stroke-width="1.6" fill="none"/><rect x="413.35" y="351.25" width="286.40" height="29.00" stroke="#000" stroke-width="1.6" fill="none"/></svg>
</div></div>
<div class="a" style="left:360px;top:238px;width:756px;height:425px;border:1px solid #c4c7c5"></div>
<div class="a" style="left:0;top:200px;width:230px;height:496px;overflow:hidden">
<div class="a" style="left:42.5px;top:-16.5px;width:153px;height:90px;border:1px solid #d3d6d9;border-radius:13px"></div>
<div class="a" style="left:46.5px;top:-12.6px;width:145.2px;height:81.6px;border-radius:9px;overflow:hidden;background:#c9dbee"><div class="a" style="left:4.5px;top:-12px;width:136px;height:90px;background:#fff;border:1px solid #666"></div><div class="a" style="left:4.5px;top:15.5px;width:136px;height:1px;background:#666"></div><div class="a" style="left:2px;top:-2px;width:2.5px;height:2.5px;background:#a030a0"></div><div class="a" style="left:8px;top:18.6px;width:1.5px;height:1.2px;background:#999"></div><div class="a" style="left:13px;top:18.6px;width:66px;height:1.1px;background:repeating-linear-gradient(90deg,#a8a8a8 0 7px,transparent 7px 8.2px,#a8a8a8 8.2px 11px,transparent 11px 12.2px);opacity:.75"></div><div class="a" style="left:20px;top:21.6px;width:18px;height:1.1px;background:repeating-linear-gradient(90deg,#b8b8b8 0 7px,transparent 7px 8.2px,#b8b8b8 8.2px 11px,transparent 11px 12.2px);opacity:.75"></div><div class="a" style="left:50px;top:21.6px;width:18px;height:1.1px;background:repeating-linear-gradient(90deg,#b8b8b8 0 7px,transparent 7px 8.2px,#b8b8b8 8.2px 11px,transparent 11px 12.2px);opacity:.75"></div><div class="a" style="left:20px;top:24.6px;width:18px;height:1.1px;background:repeating-linear-gradient(90deg,#b8b8b8 0 7px,transparent 7px 8.2px,#b8b8b8 8.2px 11px,transparent 11px 12.2px);opacity:.75"></div><div class="a" style="left:50px;top:24.6px;width:18px;height:1.1px;background:repeating-linear-gradient(90deg,#b8b8b8 0 7px,transparent 7px 8.2px,#b8b8b8 8.2px 11px,transparent 11px 12.2px);opacity:.75"></div><div class="a" style="left:8px;top:29.6px;width:1.5px;height:1.2px;background:#999"></div><div class="a" style="left:13px;top:29.6px;width:66px;height:1.1px;background:repeating-linear-gradient(90deg,#a8a8a8 0 7px,transparent 7px 8.2px,#a8a8a8 8.2px 11px,transparent 11px 12.2px);opacity:.75"></div><div class="a" style="left:13px;top:32.6px;width:36px;height:1.1px;background:repeating-linear-gradient(90deg,#a8a8a8 0 7px,transparent 7px 8.2px,#a8a8a8 8.2px 11px,transparent 11px 12.2px);opacity:.75"></div><div class="a" style="left:20px;top:35.6px;width:18px;height:1.1px;background:repeating-linear-gradient(90deg,#b8b8b8 0 7px,transparent 7px 8.2px,#b8b8b8 8.2px 11px,transparent 11px 12.2px);opacity:.75"></div><div class="a" style="left:50px;top:35.6px;width:18px;height:1.1px;background:repeating-linear-gradient(90deg,#b8b8b8 0 7px,transparent 7px 8.2px,#b8b8b8 8.2px 11px,transparent 11px 12.2px);opacity:.75"></div><div class="a" style="left:20px;top:38.6px;width:18px;height:1.1px;background:repeating-linear-gradient(90deg,#b8b8b8 0 7px,transparent 7px 8.2px,#b8b8b8 8.2px 11px,transparent 11px 12.2px);opacity:.75"></div><div class="a" style="left:50px;top:38.6px;width:18px;height:1.1px;background:repeating-linear-gradient(90deg,#b8b8b8 0 7px,transparent 7px 8.2px,#b8b8b8 8.2px 11px,transparent 11px 12.2px);opacity:.75"></div><div class="a" style="left:8px;top:44.6px;width:1.5px;height:1.2px;background:#999"></div><div class="a" style="left:13px;top:44.6px;width:66px;height:1.1px;background:repeating-linear-gradient(90deg,#a8a8a8 0 7px,transparent 7px 8.2px,#a8a8a8 8.2px 11px,transparent 11px 12.2px);opacity:.75"></div><div class="a" style="left:13px;top:47.6px;width:36px;height:1.1px;background:repeating-linear-gradient(90deg,#a8a8a8 0 7px,transparent 7px 8.2px,#a8a8a8 8.2px 11px,transparent 11px 12.2px);opacity:.75"></div><div class="a" style="left:20px;top:50.6px;width:18px;height:1.1px;background:repeating-linear-gradient(90deg,#b8b8b8 0 7px,transparent 7px 8.2px,#b8b8b8 8.2px 11px,transparent 11px 12.2px);opacity:.75"></div><div class="a" style="left:50px;top:50.6px;width:18px;height:1.1px;background:repeating-linear-gradient(90deg,#b8b8b8 0 7px,transparent 7px 8.2px,#b8b8b8 8.2px 11px,transparent 11px 12.2px);opacity:.75"></div><div class="a" style="left:20px;top:53.6px;width:18px;height:1.1px;background:repeating-linear-gradient(90deg,#b8b8b8 0 7px,transparent 7px 8.2px,#b8b8b8 8.2px 11px,transparent 11px 12.2px);opacity:.75"></div><div class="a" style="left:50px;top:53.6px;width:18px;height:1.1px;background:repeating-linear-gradient(90deg,#b8b8b8 0 7px,transparent 7px 8.2px,#b8b8b8 8.2px 11px,transparent 11px 12.2px);opacity:.75"></div><div class="a" style="left:8px;top:58.6px;width:1.5px;height:1.2px;background:#999"></div><div class="a" style="left:13px;top:58.6px;width:66px;height:1.1px;background:repeating-linear-gradient(90deg,#a8a8a8 0 7px,transparent 7px 8.2px,#a8a8a8 8.2px 11px,transparent 11px 12.2px);opacity:.75"></div><div class="a" style="left:13px;top:61.6px;width:36px;height:1.1px;background:repeating-linear-gradient(90deg,#a8a8a8 0 7px,transparent 7px 8.2px,#a8a8a8 8.2px 11px,transparent 11px 12.2px);opacity:.75"></div><div class="a" style="left:20px;top:64.6px;width:30px;height:1.1px;background:repeating-linear-gradient(90deg,#b8b8b8 0 7px,transparent 7px 8.2px,#b8b8b8 8.2px 11px,transparent 11px 12.2px);opacity:.75"></div><div class="a" style="left:20px;top:67.6px;width:30px;height:1.1px;background:repeating-linear-gradient(90deg,#b8b8b8 0 7px,transparent 7px 8.2px,#b8b8b8 8.2px 11px,transparent 11px 12.2px);opacity:.75"></div><div class="a" style="left:20px;top:70.6px;width:56px;height:1.1px;background:repeating-linear-gradient(90deg,#b8b8b8 0 7px,transparent 7px 8.2px,#b8b8b8 8.2px 11px,transparent 11px 12.2px);opacity:.75"></div><div class="a" style="left:20px;top:73.6px;width:30px;height:1.1px;background:repeating-linear-gradient(90deg,#b8b8b8 0 7px,transparent 7px 8.2px,#b8b8b8 8.2px 11px,transparent 11px 12.2px);opacity:.75"></div><div class="a" style="left:20px;top:23.3px;width:3.2px;height:3.2px;border-radius:50%;border:0.8px solid #e03030"></div><div class="a" style="left:58px;top:34.3px;width:3.2px;height:3.2px;border-radius:50%;border:0.8px solid #e03030"></div><div class="a" style="left:20px;top:49.3px;width:3.2px;height:3.2px;border-radius:50%;border:0.8px solid #e03030"></div><div class="a" style="left:20px;top:66.3px;width:3.2px;height:3.2px;border-radius:50%;border:0.8px solid #e03030"></div><div class="a" style="left:79.5px;top:17.6px;width:57.5px;height:56.7px;background:#cbbfdc;overflow:hidden;border:0.5px solid #ddd"><div class="a" style="left:-1px;top:10px;width:3px;height:34px;background:#3a70c8"></div><div class="a" style="left:5px;top:-8px;width:28px;height:30px;border-radius:50%;background:#34b24a"></div><div class="a" style="left:8px;top:-6px;width:10px;height:14px;border-radius:50%;background:#8ad890;opacity:.6"></div><div class="a" style="left:30px;top:-2px;width:30px;height:36px;border-radius:45%;background:#ebe048"></div><div class="a" style="left:34px;top:2px;width:18px;height:20px;border-radius:50%;background:#f6f0a0;opacity:.6"></div><div class="a" style="left:10px;top:24px;width:20px;height:22px;border-radius:50%;background:#6c1a32"></div><div class="a" style="left:17px;top:15px;width:4px;height:11px;background:#d8d8d8"></div><div class="a" style="left:22px;top:30px;width:24px;height:22px;background:#9a88c4;transform:rotate(30deg)"></div><div class="a" style="left:32px;top:36px;width:18px;height:17px;border-radius:50%;background:#a21c3a"></div><div class="a" style="left:46px;top:26px;width:14px;height:32px;background:#ee74ae"></div><div class="a" style="left:-2px;top:45px;width:14px;height:12px;border-radius:50%;background:#b02a48"></div></div></div>
<div class="a" style="left:42.5px;top:86px;width:153px;height:90px;border:1px solid #d3d6d9;border-radius:13px"></div>
<div class="a" style="left:46.5px;top:90px;width:145.2px;height:81.6px;border-radius:9px;overflow:hidden;background:#c9dbee"><div class="a" style="left:19.5px;top:2.8px;width:91px;height:17.6px;background:#fff;border:1px solid #777"></div><div class="a" style="left:19.5px;top:10.8px;width:91px;height:1px;background:#777"></div><div class="a" style="left:26px;top:4.2px;font-size:9px;line-height:10px;color:#999;white-space:nowrap;transform:scale(0.38,0.5);transform-origin:0 0">Watch this video to answer the following questions</div><div class="a" style="left:23px;top:12.2px;font-size:11px;line-height:12px;font-weight:bold;color:#333;white-space:nowrap;transform:scale(0.37,0.5);transform-origin:0 0">Solving the Puzzle of the Periodic Table</div><div class="a" style="left:7.5px;top:21.8px;width:97.7px;height:54.6px;background:#0c1160"></div><div class="a" style="left:10.5px;top:23.5px;font-size:12.2px;line-height:11px;font-weight:bold;color:#f4f4f4;white-space:nowrap;transform:scaleX(0.72);transform-origin:0 0">THE PUZZLE OF<br>THE PERIODIC<br>TABLE</div><div class="a" style="left:94.5px;top:23.6px;width:9.2px;height:9.2px;border-radius:50%;background:#e31e24"></div><div class="a" style="left:40.6px;top:49px;width:36.2px;height:15.7px;background:#f2c124"></div><div class="a" style="left:76.8px;top:40.6px;width:6px;height:24px;background:#8cc63f"></div><div class="a" style="left:82.8px;top:40.6px;width:14.8px;height:15.4px;background:#46ade3"></div><div class="a" style="left:82.8px;top:56px;width:14.8px;height:4.8px;background:#8cc63f"></div><div class="a" style="left:97px;top:36.7px;width:4.6px;height:28px;background:#3d87d0"></div><div class="a" style="left:60px;top:60.8px;width:41.6px;height:3.9px;background:#7c8fe0"></div><div class="a" style="left:40.6px;top:66px;width:57px;height:7.8px;background:#f0973a"></div><div class="a" style="left:27.4px;top:60px;width:11.6px;height:4.7px;background:#e34040"></div><div class="a" style="left:40.6px;top:49px;width:61px;height:25px;background:repeating-linear-gradient(90deg,transparent 0 3px,rgba(12,17,96,0.4) 3px 3.8px),repeating-linear-gradient(180deg,transparent 0 3px,rgba(12,17,96,0.4) 3px 3.8px)"></div><div class="a" style="left:76.8px;top:36.2px;width:25px;height:12.8px;background:repeating-linear-gradient(90deg,transparent 0 3px,rgba(12,17,96,0.4) 3px 3.8px),repeating-linear-gradient(180deg,transparent 0 3px,rgba(12,17,96,0.4) 3px 3.8px)"></div><div class="a" style="left:103.5px;top:16.5px;font-size:28.5px;line-height:22px;font-weight:bold;color:#12985a;white-space:nowrap">02</div><svg class="a" style="left:105px;top:40px" width="28" height="24"><path d="M5 5 L12.5 12.8 L21 9 M12.5 12.8 L19 11 M12.5 12.8 L8 20" stroke="#888" stroke-width="0.8" fill="none"/><circle cx="5" cy="5" r="2.8" fill="#f6e08a" stroke="#999" stroke-width=".5"/><circle cx="12.5" cy="12.8" r="3.8" fill="#f5a51c"/><circle cx="21" cy="8" r="1.9" fill="#4aa8e0"/><circle cx="18.5" cy="11" r="1.6" fill="#c03ac0"/><circle cx="8" cy="20" r="2" fill="#90d8a8"/></svg></div>
<div class="a" style="left:42.5px;top:188px;width:153px;height:90px;border:1px solid #d3d6d9;border-radius:13px"></div>
<div class="a" style="left:46.5px;top:192px;width:145.2px;height:81.6px;border-radius:9px;overflow:hidden;background:#c9dbee"><div class="a" style="left:4.5px;top:4.1px;width:136px;height:72.8px;background:#fff;border:1px solid #6a6a6a"></div><div class="a" style="left:72.5px;top:4.1px;width:1px;height:72.8px;background:#6a6a6a"></div><div class="a" style="left:4.5px;top:14.3px;width:68px;height:1px;background:#6a6a6a"></div><div class="a" style="left:10.5px;top:7.2px;font-size:9.5px;line-height:10px;font-weight:bold;color:#222;white-space:nowrap;transform:scale(0.49,0.5);transform-origin:0 0;letter-spacing:0.3px">PERIODIC TABLE</div><div class="a" style="left:1.5px;top:4.8px;width:2.8px;height:2.8px;border-radius:50%;background:#f5a623"></div><div class="a" style="left:1.5px;top:8.9px;width:2.8px;height:2.8px;border-radius:50%;background:#c43ac6"></div><div class="a" style="left:4.8px;top:6.8px;width:2.8px;height:2.8px;border-radius:50%;background:#14905a"></div><div class="a" style="left:8.5px;top:17px;width:62px;height:3.5px;background:repeating-linear-gradient(180deg,#c4c4c4 0 1.1px,transparent 1.1px 3.2px)"></div><div class="a" style="left:13px;top:19.8px;width:22px;height:6px;background:repeating-linear-gradient(180deg,#c8c8c8 0 1.1px,transparent 1.1px 3.2px)"></div><div class="a" style="left:47px;top:19.8px;width:22px;height:6px;background:repeating-linear-gradient(180deg,#c8c8c8 0 1.1px,transparent 1.1px 3.2px)"></div><div class="a" style="left:4.8px;top:23px;width:3.2px;height:3.2px;border-radius:50%;border:0.7px solid #e04040"></div><div class="a" style="left:10.6px;top:36px;width:11.9px;height:11.8px;background:#f27a93"></div><div class="a" style="left:11.799999999999999px;top:38.6px;font-size:12px;line-height:12px;font-weight:bold;color:#1a1a1a;white-space:nowrap;transform:scale(0.55,0.5);transform-origin:0 0">Au</div><div class="a" style="left:25.5px;top:36px;width:11.9px;height:11.8px;background:#8ab4d8"></div><div class="a" style="left:26.7px;top:38.6px;font-size:12px;line-height:12px;font-weight:bold;color:#1a1a1a;white-space:nowrap;transform:scale(0.55,0.5);transform-origin:0 0">Ag</div><div class="a" style="left:40.2px;top:36px;width:11.9px;height:11.8px;background:#f6a468"></div><div class="a" style="left:41.400000000000006px;top:38.6px;font-size:12px;line-height:12px;font-weight:bold;color:#1a1a1a;white-space:nowrap;transform:scale(0.55,0.5);transform-origin:0 0">Br</div><div class="a" style="left:54.7px;top:36px;width:11.9px;height:11.8px;background:#f27a93"></div><div class="a" style="left:55.900000000000006px;top:38.6px;font-size:12px;line-height:12px;font-weight:bold;color:#1a1a1a;white-space:nowrap;transform:scale(0.55,0.5);transform-origin:0 0">Cu</div><div class="a" style="left:8.5px;top:49.5px;width:61px;height:11px;background:repeating-linear-gradient(180deg,#d4d4d4 0 1px,transparent 1px 3.2px)"></div><div class="a" style="left:9.5px;top:51.5px;width:3.2px;height:3.2px;border-radius:50%;border:0.7px solid #e04040"></div><div class="a" style="left:76.5px;top:7px;width:59px;height:6px;background:repeating-linear-gradient(180deg,#d0d0d0 0 1.1px,transparent 1.1px 3.2px)"></div><div class="a" style="left:81px;top:10.3px;width:3.2px;height:3.2px;border-radius:50%;border:0.7px solid #e04040"></div><div class="a" style="left:84.5px;top:21px;width:9.5px;height:11px;background:#1c1fd0"></div><div class="a" style="left:96.5px;top:21px;width:9.5px;height:11px;background:#f3a3a3"></div><div class="a" style="left:108.5px;top:21px;width:9.5px;height:11px;background:#cfcfcf"></div><div class="a" style="left:120.5px;top:21px;width:9.5px;height:11px;background:#fcd80c"></div><div class="a" style="left:87px;top:25px;width:4px;height:4px;border-radius:50%;background:#d01010"></div><div class="a" style="left:123px;top:24px;width:3px;height:5px;background:#d04020"></div><div class="a" style="left:76.5px;top:35px;width:56px;height:6px;background:repeating-linear-gradient(180deg,#d0d0d0 0 1.1px,transparent 1.1px 3.2px)"></div><div class="a" style="left:76.5px;top:46px;width:56px;height:6px;background:repeating-linear-gradient(180deg,#d0d0d0 0 1.1px,transparent 1.1px 3.2px)"></div><div class="a" style="left:81px;top:34.5px;width:3.2px;height:3.2px;border-radius:50%;border:0.7px solid #e04040"></div><div class="a" style="left:114px;top:48px;width:3.2px;height:3.2px;border-radius:50%;border:0.7px solid #e04040"></div><div class="a" style="left:85.5px;top:63.5px;width:9.5px;height:11px;background:#e0138a"></div><div class="a" style="left:96.5px;top:63.5px;width:9.5px;height:11px;background:#5a1a7a"></div><div class="a" style="left:108px;top:63.5px;width:9.5px;height:11px;background:#b48ac8"></div><div class="a" style="left:136px;top:42px;width:6px;height:7px;border-radius:50%;background:#e8c8a0"></div><div class="a" style="left:135px;top:49px;width:8px;height:10px;background:#8a5a30"></div><div class="a" style="left:136px;top:58px;width:6px;height:5px;background:#3060a0"></div></div>
<div class="a" style="left:42.5px;top:290px;width:153px;height:90px;border:1px solid #d3d6d9;border-radius:13px"></div>
<div class="a" style="left:46.5px;top:294px;width:145.2px;height:81.6px;border-radius:9px;overflow:hidden;background:#c9dbee"><div class="a" style="left:53.5px;top:-2.8px;font-size:24.3px;line-height:24px;font-weight:bold;color:#f26a80;white-space:nowrap;transform:scaleX(1.33);transform-origin:0 0">03</div><div class="a" style="left:27.1px;top:19.6px;width:90.7px;height:10px;background:#fff;border:1px solid #888"></div><div class="a" style="left:30px;top:21.2px;font-size:8px;line-height:8px;color:#444;white-space:nowrap;transform:scale(0.31,0.43);transform-origin:0 0">Use this Interactive Periodic Table and this Website to help you answer</div><div class="a" style="left:59px;top:25px;font-size:8px;line-height:8px;color:#444;white-space:nowrap;transform:scale(0.31,0.43);transform-origin:0 0">the following questions:</div><svg class="a" style="left:0;top:0" width="145" height="82"><path d="M70 38 C80 50 90 60 75 78 M95 40 C85 55 70 62 60 70" stroke="#e0eaf4" stroke-width="0.8" fill="none"/><path d="M16.3 16 L24.1 20.6 L31.5 18.6 L33.2 14.7 M24.1 20.6 L21.5 28.6" stroke="#888" stroke-width="0.6" fill="none"/><circle cx="16.3" cy="16" r="2.4" fill="#f7e08a" stroke="#aaa" stroke-width="0.4"/><circle cx="24.1" cy="20.6" r="3.5" fill="#f5a51c"/><circle cx="33.2" cy="14.7" r="1.7" fill="#4aa8e0"/><circle cx="31.5" cy="18.6" r="1.5" fill="#f07090"/><circle cx="21.5" cy="28.6" r="1.9" fill="#90d8a8"/><circle cx="126" cy="31.6" r="1.7" fill="#14905a"/><circle cx="130.5" cy="30.6" r="1.6" fill="#f7e08a"/><circle cx="134.5" cy="34.6" r="1.5" fill="#4aa8e0"/></svg><div class="a" style="left:9.7px;top:33.9px;width:54.2px;height:7.5px;background:#fff;border:1px solid #777"></div><div class="a" style="left:13.5px;top:35.5px;font-size:8px;line-height:8px;font-weight:bold;color:#222;white-space:nowrap;transform:scale(0.43,0.45);transform-origin:0 0;text-decoration:underline">Interactive Periodic Table</div><div class="a" style="left:75.1px;top:33.9px;width:58.1px;height:7.5px;background:#fff;border:1px solid #777"></div><div class="a" style="left:78px;top:35.5px;font-size:8px;line-height:8px;font-weight:bold;color:#222;white-space:nowrap;transform:scale(0.4,0.45);transform-origin:0 0;text-decoration:underline">How to Read the Periodic Table</div><div class="a" style="left:9.7px;top:42.7px;width:54.1px;height:31.9px;background:#fff"></div><div class="a" style="left:9.7px;top:42.7px;width:54.1px;height:2.5px;background:#eee"></div><div class="a" style="left:10.5px;top:45.5px;width:3px;height:3px;background:#6a3a9a"></div><div class="a" style="left:10.5px;top:49px;width:3.1px;height:17.5px;background:#45b0e0"></div><div class="a" style="left:13.6px;top:49px;width:3px;height:17.5px;background:#2a6ab8"></div><div class="a" style="left:16.4px;top:54.7px;width:29.2px;height:12px;background:#404040"></div><div class="a" style="left:45.6px;top:49px;width:13.4px;height:17.7px;background:#e8852a"></div><div class="a" style="left:48.5px;top:49px;width:10.5px;height:8px;background:#7a3a8a"></div><div class="a" style="left:49px;top:53px;width:6px;height:6px;background:#b03040"></div><div class="a" style="left:59px;top:45.5px;width:4px;height:21.2px;background:#7a50e0"></div><div class="a" style="left:17px;top:63.5px;width:3px;height:3px;background:#70d050"></div><div class="a" style="left:20px;top:68.7px;width:43.5px;height:2.8px;background:#2a5ec0"></div><div class="a" style="left:20px;top:71.5px;width:43.5px;height:2.8px;background:#68d048"></div><div class="a" style="left:11px;top:69px;width:8px;height:5px;background:#e8e8e8"></div><div class="a" style="left:81.5px;top:41.9px;width:50.2px;height:36.4px;background:#f4b52b"></div><div class="a" style="left:81.5px;top:41.9px;width:50.2px;height:36.4px;background:radial-gradient(ellipse at 30% 60%,rgba(255,210,80,.6),transparent 60%)"></div><div class="a" style="left:90px;top:48px;width:32px;height:2px;background:#3a2a10;opacity:.7"></div><div class="a" style="left:84px;top:51.5px;width:45px;height:4px;background:repeating-linear-gradient(180deg,rgba(90,60,10,.45) 0 0.8px,transparent 0.8px 1.6px)"></div><div class="a" style="left:88px;top:57.5px;width:37px;height:1.6px;background:#3a2a10;opacity:.7"></div><div class="a" style="left:84px;top:60px;width:45px;height:3px;background:repeating-linear-gradient(180deg,rgba(90,60,10,.4) 0 0.8px,transparent 0.8px 1.6px)"></div><div class="a" style="left:84px;top:64px;width:22px;height:9px;background:repeating-linear-gradient(180deg,rgba(90,60,10,.35) 0 0.8px,transparent 0.8px 2.2px)"></div><div class="a" style="left:118px;top:64px;width:12px;height:6px;background:repeating-linear-gradient(180deg,rgba(90,60,10,.35) 0 0.8px,transparent 0.8px 2.2px)"></div><div class="a" style="left:108.7px;top:66px;width:7.6px;height:9px;background:#a8d8ec"></div><div class="a" style="left:110.5px;top:68.5px;width:4px;height:4px;border-radius:50%;border:1px solid #333;border-right-color:transparent"></div></div>
<div class="a" style="left:41px;top:391px;width:156px;height:92px;border:3px solid #0b57d0;border-radius:14px"></div>
<div class="a" style="left:46.5px;top:396px;width:145.2px;height:81.6px;border-radius:9px;overflow:hidden;background:#c9dbee"><div class="a" style="left:0;top:0;width:756px;height:425px;transform:scale(0.19206);transform-origin:0 0"><div class="a" style="left:0;top:0;width:756px;height:425px;background:#cbdcee;overflow:hidden">
<div class="a" style="left:5px;top:5px;width:54px;height:54px;border-radius:50%;background:radial-gradient(circle,rgba(255,255,255,0.6) 0 0.6px,transparent 1px) 0 0/3px 3px;opacity:0.8"></div>
<div class="a" style="left:28px;top:23px;width:700px;height:378px;background:#fff"></div>
<svg class="a" style="left:0;top:0" width="756" height="425"><rect x="28.600000000000023" y="23.899999999999977" width="698.6" height="376.4" stroke="#000" stroke-width="1.6" fill="none"/><path d="M28.600000000000023 77.89999999999998 H727.2" stroke="#000" stroke-width="1.5"/></svg>
<div class="a" style="left:59.5px;top:39px;font-size:23px;line-height:27px;font-weight:bold;color:#000;white-space:nowrap;letter-spacing:1.9px;word-spacing:2.5px;transform:scaleX(0.8436);transform-origin:0 0">ELEMENTS OF THE PERIODIC TABLE</div>
<svg class="a" style="left:5px;top:24px" width="46" height="52" viewBox="0 0 46 52"><path d="M13 12 L34 27 L13 41" stroke="#000" stroke-width="1.6" fill="none"/><circle cx="13" cy="12" r="6.7" fill="#fbb20d" stroke="#000" stroke-width="1.8"/><path d="M9.5 10 A4 4 0 0 1 13 7.6" stroke="#fff" stroke-width="1.2" fill="none"/><circle cx="34" cy="27" r="6.9" fill="#14905a" stroke="#000" stroke-width="1.8"/><path d="M30.5 25 A4 4 0 0 1 34 22.6" stroke="#fff" stroke-width="1.2" fill="none"/><circle cx="13" cy="41" r="6.7" fill="#c43ac6" stroke="#000" stroke-width="1.8"/><path d="M9.5 43.5 A4 4 0 0 0 13 46" stroke="#fff" stroke-width="1.2" fill="none"/></svg>
<div class="a q" style="left:41.19999999999999px;top:85.60000000000002px;transform:scaleX(0.78)">13.</div>
<div class="a q" style="left:73.60000000000002px;top:85.60000000000002px;transform:scaleX(0.8480)">Which element is number 16 on the periodic table?</div>
<div class="a ans" style="left:76.80000000000001px;top:118.70000000000002px">Sulfur</div>
<div class="a q" style="left:41.19999999999999px;top:146.3px;transform:scaleX(0.78)">14.</div>
<div class="a q" style="left:73.60000000000002px;top:146.3px;transform:scaleX(0.8505)">What is the element symbol for sodium?</div>
<div class="a ans" style="left:76.80000000000001px;top:179.15px">Na</div>
<div class="a q" style="left:41.19999999999999px;top:206.7px;transform:scaleX(0.78)">15.</div>
<div class="a q" style="left:73.60000000000002px;top:206.7px;transform:scaleX(0.8557)">How many protons are in an element of zinc?</div>
<div class="a ans" style="left:76.80000000000001px;top:238.9px">30</div>
<div class="a q" style="left:41.19999999999999px;top:266.6px;transform:scaleX(0.78)">16.</div>
<div class="a q" style="left:73.60000000000002px;top:266.6px;transform:scaleX(0.8463)">What is the atomic mass of Carbon?</div>
<div class="a q" style="left:43px;top:327.0px;transform:scaleX(0.78)">17.</div>
<div class="a q" style="left:73.60000000000002px;top:327.0px;transform:scaleX(0.8551)">What is the name of the element with the symbol W?</div>
<div class="a q" style="left:384.5px;top:87.0px;transform:scaleX(0.78)">18.</div>
<div class="a q" style="left:416.9px;top:87.0px;transform:scaleX(0.8509)">What is the atomic number of Rubidium?</div>
<div class="a q" style="left:385px;top:148.2px;transform:scaleX(0.78)">19.</div>
<div class="a q" style="left:416.9px;top:148.2px;transform:scaleX(0.8542)">How many electrons are in an atom of Phosphorus?</div>
<div class="a q" style="left:381px;top:208.10000000000002px;transform:scaleX(0.78)">20.</div>
<div class="a q" style="left:416.9px;top:208.10000000000002px;transform:scaleX(0.8230)">Which element has an atomic mass of 131.3?</div>
<div class="a q" style="left:385px;top:267.79999999999995px;transform:scaleX(0.78)">21.</div>
<div class="a q" style="left:416.9px;top:267.79999999999995px;transform:scaleX(0.8561)">Which element's name comes from the 8th planet?</div>
<div class="a q" style="left:381px;top:329.0px;transform:scaleX(0.78)">22.</div>
<div class="a q" style="left:416.9px;top:329.0px;transform:scaleX(0.8509)">How many protons are in an atom of Bismuth?</div>
<svg class="a" style="left:0;top:0" width="756" height="425"><rect x="69.35" y="110.65" width="286.40" height="29.30" stroke="#000" stroke-width="1.6" fill="none"/><rect x="69.35" y="171.15" width="286.40" height="29.60" stroke="#000" stroke-width="1.6" fill="none"/><rect x="70.55" y="231.55" width="286.00" height="29.20" stroke="#000" stroke-width="1.6" fill="none"/><rect x="70.75" y="292.25" width="286.00" height="28.80" stroke="#000" stroke-width="1.6" fill="none"/><rect x="71.75" y="352.05" width="286.00" height="28.50" stroke="#000" stroke-width="1.6" fill="none"/><rect x="412.25" y="110.25" width="285.50" height="28.60" stroke="#000" stroke-width="1.6" fill="none"/><rect x="412.25" y="170.95" width="285.50" height="29.10" stroke="#000" stroke-width="1.6" fill="none"/><rect x="412.75" y="231.35" width="285.50" height="29.10" stroke="#000" stroke-width="1.6" fill="none"/><rect x="412.75" y="291.75" width="285.50" height="29.00" stroke="#000" stroke-width="1.6" fill="none"/><rect x="413.35" y="351.25" width="286.40" height="29.00" stroke="#000" stroke-width="1.6" fill="none"/></svg>
</div></div></div>
<div class="a" style="left:42.5px;top:493px;width:153px;height:90px;border:1px solid #d3d6d9;border-radius:13px"></div>
</div>
<div class="a" style="left:0;width:31px;text-align:right;top:289px;font-size:15px;line-height:17px;color:#444746;transform:scaleX(0.88);transform-origin:31px 0">9</div>
<div class="a" style="left:0;width:31px;text-align:right;top:390px;font-size:15px;line-height:17px;color:#444746;transform:scaleX(0.88);transform-origin:31px 0">10</div>
<div class="a" style="left:0;width:31px;text-align:right;top:492px;font-size:15px;line-height:17px;color:#444746;transform:scaleX(0.88);transform-origin:31px 0">11</div>
<div class="a" style="left:0;width:31px;text-align:right;top:594px;font-size:15px;line-height:17px;color:#444746;transform:scaleX(0.88);transform-origin:31px 0">12</div>
<svg class="a" style="left:13px;top:312px" width="20" height="18" viewBox="0 0 20 18"><circle cx="7" cy="11.5" r="4.8" stroke="#444746" stroke-width="1.3" fill="none"/><circle cx="10" cy="9" r="4.8" stroke="#444746" stroke-width="1.3" fill="none"/><circle cx="13" cy="6.5" r="4.8" stroke="#444746" stroke-width="1.3" fill="none"/></svg>
<div class="a" style="left:207px;top:313px;width:8px;height:64px;border-radius:4px;background:#d4d5d6"></div>
<svg class="a" style="left:0;top:0;width:1px;height:1px;overflow:visible"><g stroke="#444746" stroke-width="1.5" fill="none"><rect x="29.5" y="725.5" width="4.6" height="4.6"/><rect x="37.6" y="725.5" width="4.6" height="4.6"/><rect x="29.5" y="733.5" width="4.6" height="4.6"/><rect x="37.6" y="733.5" width="4.6" height="4.6"/><path d="M87.5 727 L82 732 L87.5 737" stroke-width="1.7"/></g></svg>
<div class="a" style="left:1254px;top:327px;width:48px;height:193px;border-radius:24px;background:#f0f4f9"></div>
<div class="a" style="left:1254px;top:524px;width:48px;height:104px;border-radius:24px;background:#f0f4f9"></div>
<svg class="a" style="left:1270px;top:350px" width="16" height="14" viewBox="0 0 16 14"><rect x="1" y="1.5" width="14" height="11" rx="1.5" stroke="#444746" stroke-width="1.5" fill="none"/><path d="M3.5 5.3 H9 M3.5 8.7 H9" stroke="#444746" stroke-width="1.6"/><path d="M11.5 4 V10" stroke="#444746" stroke-width="2.2"/></svg>
<svg class="a" style="left:1269px;top:393px" width="18" height="16" viewBox="0 0 18 16"><rect x="5.5" y="1" width="10" height="10" rx="1" stroke="#444746" stroke-width="1.5" fill="none"/><circle cx="10.5" cy="6" r="1.8" stroke="#444746" stroke-width="1.3" fill="none"/><path d="M2.5 5 L3 15 L13 14.5" stroke="#444746" stroke-width="1.5" fill="none"/></svg>
<svg class="a" style="left:1270px;top:439px" width="18" height="16" viewBox="0 0 18 16"><path d="M8 2 H2 V15 H15 V10" stroke="#444746" stroke-width="1.5" fill="none"/><path d="M4 13 L7 9.5 L9 11.5 L10.5 10 L13 13Z" fill="#444746"/><circle cx="12.5" cy="4.5" r="2.5" stroke="#444746" stroke-width="1.4" fill="none"/><path d="M14.3 6.3 L16.5 8.5" stroke="#444746" stroke-width="1.5"/></svg>
<svg class="a" style="left:1269px;top:482px" width="18" height="16" viewBox="0 0 18 16"><path d="M1.5 2.5 H7 L8.5 4.5 H16.5 V14 H1.5Z" stroke="#444746" stroke-width="1.5" fill="none" stroke-linejoin="round"/></svg>
<svg class="a" style="left:1270px;top:546px" width="16" height="16" viewBox="0 0 16 16"><rect x="1" y="1" width="14" height="14" rx="1" stroke="#444746" stroke-width="1.5" fill="none"/><path d="M5.5 4 L11.5 8 L5.5 12Z" stroke="#444746" stroke-width="1.4" fill="none" stroke-linejoin="round"/></svg>
<svg class="a" style="left:1268px;top:588px" width="20" height="20" viewBox="0 0 20 20"><circle cx="10" cy="10" r="8" stroke="#b0b3b6" stroke-width="1.6" fill="none"/><circle cx="10" cy="10" r="5" fill="#b0b3b6"/></svg>
<div class="a" style="left:1294px;top:720.5px;width:39px;height:39px;border-radius:20px;background:#fff;box-shadow:0 1px 3px rgba(0,0,0,0.25)"></div>
<svg class="a" style="left:1302px;top:733px" width="12" height="14" viewBox="0 0 12 14"><path d="M9 2 L4 7 L9 12" stroke="#444746" stroke-width="1.8" fill="none"/></svg>
<div class="a" style="left:236px;top:704px;width:986px;height:48px;border-radius:8px;background:#edf2fa"></div>
<div class="a" style="left:252px;top:717px;font-size:14.6px;color:#1f1f1f;white-space:nowrap">Click to add speaker notes</div>
<div class="a" style="left:705px;top:682px;width:48px;height:1.5px;background:#5f6368"></div>
<div class="a" style="left:1318px;top:0;width:48px;height:768px;background:#000"></div>
<div class="a" style="left:1324px;top:6px;width:36px;height:36px;border-radius:18px;background:#333"></div>
<div class="a" style="left:1335px;top:17px;width:14px;height:14px;border-radius:7px;border:2px solid #eee"></div>
<div class="a" style="left:1324px;top:269px;width:36px;height:36px;border-radius:18px;background:#333"></div>
<div class="a" style="left:1324px;top:276px;width:36px;text-align:center;font-size:15px;color:#eee">m</div>
<svg class="a" style="left:1325px;top:326px" width="33" height="33" viewBox="0 0 48 48"><circle cx="24" cy="24" r="23" fill="#db4437"/><path d="M24 24 L4.1 35.5 A23 23 0 0 0 35.5 43.9Z" fill="#0f9d58"/><path d="M24 24 L35.5 43.9 A23 23 0 0 0 44 12.5 L24 12.5Z" fill="#ffcd40"/><path d="M24 24 L4.1 35.5 A23 23 0 0 1 4.1 12.5Z" fill="#0f9d58"/><circle cx="24" cy="24" r="10.5" fill="#fff"/><circle cx="24" cy="24" r="8.3" fill="#1a73e8"/></svg>
<div class="a" style="left:1361px;top:334px;width:2px;height:18px;background:#ddd"></div>
<div class="a" style="left:1325px;top:383px;width:33px;height:33px;border-radius:17px;background:#13a1a6"></div>
<svg class="a" style="left:1328px;top:390px" width="28" height="20" viewBox="0 0 28 20"><rect x="2" y="3" width="22" height="14" rx="2" fill="#d8f0f4" transform="rotate(-8 13 10)"/><rect x="5" y="6" width="8" height="7" fill="#13717a"/><path d="M15 7 H21 M15 10 H21 M15 13 H20" stroke="#13717a" stroke-width="1.5"/></svg>
<div class="a" style="left:1324px;top:439px;width:36px;height:36px;border-radius:18px;background:#333"></div>
<svg class="a" style="left:1332px;top:447px" width="20" height="20" viewBox="0 0 20 20"><rect x="6" y="2" width="12" height="12" rx="1" stroke="#eee" stroke-width="1.6" fill="none"/><path d="M3 6 V17 H14" stroke="#eee" stroke-width="1.6" fill="none"/><path d="M12 4.5 V10 M9.5 7.5 L12 10 L14.5 7.5" stroke="#eee" stroke-width="1.6" fill="none"/></svg>
<div class="a" style="left:1326px;top:485px;width:32px;height:32px;border-radius:16px;background:#f5a88e"></div>
<svg class="a" style="left:1333px;top:492px" width="18" height="18" viewBox="0 0 18 18"><path d="M6 2 H15.5 V15.5 H6 V12" stroke="#2a1a10" stroke-width="1.8" fill="none"/><path d="M6 5.5 V2" stroke="#2a1a10" stroke-width="1.8"/><path d="M2 8.8 H11 M8 5.8 L11 8.8 L8 11.8" stroke="#2a1a10" stroke-width="1.8" fill="none"/></svg>
<div class="a" style="left:1324.5px;top:527px;width:35px;height:42px;border-radius:17px 17px 5px 5px;background:#303030"></div>
<div class="a" style="left:1333.5px;top:540px;width:17px;height:17px;border-radius:9px;background:#e6e6e6;color:#222;font-size:11px;font-weight:bold;text-align:center;line-height:17px">2</div>
<div class="a" style="left:1324.5px;top:573.5px;width:35px;height:47px;border-radius:5px;background:#303030"></div>
<div class="a" style="left:1332px;top:586px;width:20px;height:21px;border:2px solid #eee;border-top-width:4px;border-radius:2px;color:#eee;font-size:10px;font-weight:bold;text-align:center;line-height:15px">8</div>
<div class="a" style="left:1324.5px;top:625.5px;width:35px;height:136.5px;border-radius:5px 5px 17px 17px;background:#303030"></div>
<div class="a" style="left:1324.5px;top:637.5px;width:35px;text-align:center;font-size:14px;line-height:18px;color:#eee;padding-left:7px">9</div>
<div class="a" style="left:1324.5px;top:655.5px;width:35px;text-align:center;font-size:14px;line-height:18px;color:#eee">23</div>
<div class="a" style="left:1324.5px;top:682.5px;width:35px;text-align:center;font-size:14px;line-height:18px;color:#eee">US</div>
<svg class="a" style="left:1333px;top:709px" width="18" height="14" viewBox="0 0 18 14"><path d="M1 4 A12 12 0 0 1 17 4 L9 13Z" fill="#eee"/></svg>
<svg class="a" style="left:0;top:0;width:1px;height:1px;overflow:visible"><path d="M1340.5 734.5 V733.5 H1343.5 V734.5 H1345 V741 M1345 743 V747.5 H1338.8 V734.5 H1340.5" stroke="#f9ab00" stroke-width="1.6" fill="none"/><path d="M1343.5 745 H1349.5 M1346.5 742 V748" stroke="#f9ab00" stroke-width="1.7"/></svg>
</body></html>
